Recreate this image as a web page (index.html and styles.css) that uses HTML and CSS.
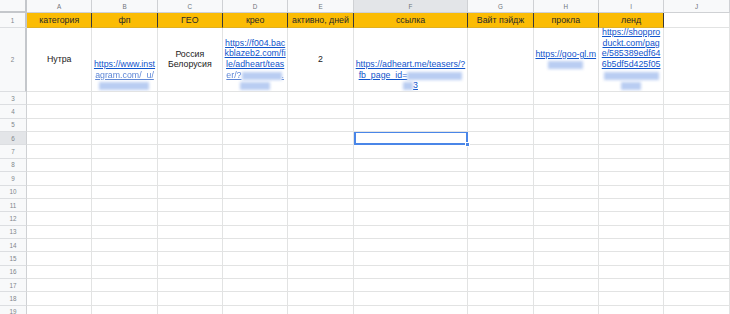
FILE: index.html
```html
<!DOCTYPE html>
<html lang="ru">
<head>
<meta charset="utf-8">
<title>Sheet</title>
<link rel="stylesheet" href="styles.css">
</head>
<body>
<div class="sheet">
  <div class="row hdr">
    <div class="c corner"></div>
    <div class="c">A</div><div class="c">B</div><div class="c">C</div><div class="c">D</div><div class="c">E</div>
    <div class="c sel">F</div><div class="c">G</div><div class="c">H</div><div class="c">I</div><div class="c">J</div>
  </div>
  <div class="row r1">
    <div class="c rn">1</div>
    <div class="c y">категория</div><div class="c y">фп</div><div class="c y">ГЕО</div><div class="c y">крео</div>
    <div class="c y">активно, дней</div><div class="c y">ссылка</div><div class="c y">Вайт пэйдж</div>
    <div class="c y">прокла</div><div class="c y">ленд</div><div class="c"></div>
  </div>
  <div class="row r2">
    <div class="c rn">2</div>
    <div class="c mid"><div class="ln">Нутра</div></div>
    <div class="c bot">
      <div class="ln"><a href="#">https://www.inst</a></div>
      <div class="ln"><a href="#" class="soft">agram.com/_u/</a></div>
      <div class="ln"><span class="blob w50"></span></div>
    </div>
    <div class="c mid"><div class="ln">Россия</div><div class="ln">Белорусия</div></div>
    <div class="c bot">
      <div class="ln"><a href="#">https://f004.bac</a></div>
      <div class="ln"><a href="#">kblazeb2.com/fi</a></div>
      <div class="ln"><a href="#">le/adheart/teas</a></div>
      <div class="ln"><a href="#" class="soft">er/?<span class="blob w40"></span>.</a></div>
      <div class="ln"><span class="blob w30"></span></div>
    </div>
    <div class="c mid"><div class="ln">2</div></div>
    <div class="c bot">
      <div class="ln"><a href="#">https://adheart.me/teasers/?</a></div>
      <div class="ln"><a href="#">fb_page_id=<span class="blob w55"></span></a></div>
      <div class="ln"><span class="blob w10"></span><a href="#">3</a></div>
    </div>
    <div class="c"></div>
    <div class="c mid">
      <div class="ln"><a href="#">https://goo-gl.m</a></div>
      <div class="ln"><span class="blob w35"></span></div>
    </div>
    <div class="c bot">
      <div class="ln"><a href="#">https://shoppro</a></div>
      <div class="ln"><a href="#">duckt.com/pag</a></div>
      <div class="ln"><a href="#">e/585389edf64</a></div>
      <div class="ln"><a href="#">6b5df5d425f05</a></div>
      <div class="ln"><span class="blob w55"></span></div>
      <div class="ln"><span class="blob w20"></span></div>
    </div>
    <div class="c"></div>
  </div>
  <div class="row"><div class="c rn">3</div><div class="c"></div><div class="c"></div><div class="c"></div><div class="c"></div><div class="c"></div><div class="c"></div><div class="c"></div><div class="c"></div><div class="c"></div><div class="c"></div></div>
  <div class="row"><div class="c rn">4</div><div class="c"></div><div class="c"></div><div class="c"></div><div class="c"></div><div class="c"></div><div class="c"></div><div class="c"></div><div class="c"></div><div class="c"></div><div class="c"></div></div>
  <div class="row"><div class="c rn">5</div><div class="c"></div><div class="c"></div><div class="c"></div><div class="c"></div><div class="c"></div><div class="c"></div><div class="c"></div><div class="c"></div><div class="c"></div><div class="c"></div></div>
  <div class="row"><div class="c rn sel">6</div><div class="c"></div><div class="c"></div><div class="c"></div><div class="c"></div><div class="c"></div><div class="c active"><span class="handle"></span></div><div class="c"></div><div class="c"></div><div class="c"></div><div class="c"></div></div>
  <div class="row"><div class="c rn">7</div><div class="c"></div><div class="c"></div><div class="c"></div><div class="c"></div><div class="c"></div><div class="c"></div><div class="c"></div><div class="c"></div><div class="c"></div><div class="c"></div></div>
  <div class="row"><div class="c rn">8</div><div class="c"></div><div class="c"></div><div class="c"></div><div class="c"></div><div class="c"></div><div class="c"></div><div class="c"></div><div class="c"></div><div class="c"></div><div class="c"></div></div>
  <div class="row"><div class="c rn">9</div><div class="c"></div><div class="c"></div><div class="c"></div><div class="c"></div><div class="c"></div><div class="c"></div><div class="c"></div><div class="c"></div><div class="c"></div><div class="c"></div></div>
  <div class="row"><div class="c rn">10</div><div class="c"></div><div class="c"></div><div class="c"></div><div class="c"></div><div class="c"></div><div class="c"></div><div class="c"></div><div class="c"></div><div class="c"></div><div class="c"></div></div>
  <div class="row"><div class="c rn">11</div><div class="c"></div><div class="c"></div><div class="c"></div><div class="c"></div><div class="c"></div><div class="c"></div><div class="c"></div><div class="c"></div><div class="c"></div><div class="c"></div></div>
  <div class="row"><div class="c rn">12</div><div class="c"></div><div class="c"></div><div class="c"></div><div class="c"></div><div class="c"></div><div class="c"></div><div class="c"></div><div class="c"></div><div class="c"></div><div class="c"></div></div>
  <div class="row"><div class="c rn">13</div><div class="c"></div><div class="c"></div><div class="c"></div><div class="c"></div><div class="c"></div><div class="c"></div><div class="c"></div><div class="c"></div><div class="c"></div><div class="c"></div></div>
  <div class="row"><div class="c rn">14</div><div class="c"></div><div class="c"></div><div class="c"></div><div class="c"></div><div class="c"></div><div class="c"></div><div class="c"></div><div class="c"></div><div class="c"></div><div class="c"></div></div>
  <div class="row"><div class="c rn">15</div><div class="c"></div><div class="c"></div><div class="c"></div><div class="c"></div><div class="c"></div><div class="c"></div><div class="c"></div><div class="c"></div><div class="c"></div><div class="c"></div></div>
  <div class="row"><div class="c rn">16</div><div class="c"></div><div class="c"></div><div class="c"></div><div class="c"></div><div class="c"></div><div class="c"></div><div class="c"></div><div class="c"></div><div class="c"></div><div class="c"></div></div>
  <div class="row"><div class="c rn">17</div><div class="c"></div><div class="c"></div><div class="c"></div><div class="c"></div><div class="c"></div><div class="c"></div><div class="c"></div><div class="c"></div><div class="c"></div><div class="c"></div></div>
  <div class="row"><div class="c rn">18</div><div class="c"></div><div class="c"></div><div class="c"></div><div class="c"></div><div class="c"></div><div class="c"></div><div class="c"></div><div class="c"></div><div class="c"></div><div class="c"></div></div>
  <div class="row"><div class="c rn">19</div><div class="c"></div><div class="c"></div><div class="c"></div><div class="c"></div><div class="c"></div><div class="c"></div><div class="c"></div><div class="c"></div><div class="c"></div><div class="c"></div></div>
</div>
</body>
</html>
```
FILE: styles.css
```css
html, body {
  margin: 0;
  padding: 0;
  background: #ffffff;
  overflow: hidden;
}
body {
  width: 730px;
  height: 314px;
  font-family: "Liberation Sans", Arial, sans-serif;
  color: #222222;
}
.sheet {
  display: flex;
  flex-direction: column;
  width: 730px;
}
.row {
  display: grid;
  grid-template-columns: 27px repeat(5, 65.33px) 114.67px repeat(3, 65.33px) 1fr;
  height: 13.37px;
  flex: none;
}
.c {
  box-sizing: border-box;
  border-right: 1px solid #e2e3e3;
  border-bottom: 1px solid #e2e3e3;
  overflow: hidden;
  font-size: 8.8px;
  min-width: 0;
}
.hdr {
  height: 13.33px;
}
.hdr .c {
  background: #f8f9fa;
  color: #70757a;
  font-size: 6.3px;
  display: flex;
  align-items: center;
  justify-content: center;
  border-right-color: #cfd1d4;
  border-bottom-color: #cfd1d4;
}
.hdr .c.sel {
  background: #e3e5e8;
}
.hdr .corner {
  border-right: 2px solid #c4c7cb;
  border-bottom: 2px solid #c4c7cb;
}
.rn {
  background: #f8f9fa;
  color: #80868b;
  font-size: 6.3px;
  display: flex;
  align-items: center;
  justify-content: center;
  border-right-color: #cfd1d4;
  border-bottom-color: #dcdee1;
}
.rn.sel {
  background: #e3e5e8;
}
.r1 {
  height: 14.67px;
}
.r1 .rn {
  border-right: 2px solid #c4c7cb;
}
.y {
  background: #fbbc04;
  color: #2a2a2a;
  display: flex;
  align-items: center;
  justify-content: center;
  white-space: nowrap;
  border-right: 1px solid #3a3a3a;
  border-bottom: 1px solid #e0b020;
}
.r2 {
  height: 64px;
}
.r2 .rn {
  border-right: 2px solid #c4c7cb;
}
.mid, .bot {
  display: flex;
  flex-direction: column;
  align-items: center;
  justify-content: center;
  text-align: center;
  white-space: nowrap;
}
.bot {
  justify-content: flex-end;
}
.ln {
  line-height: 10.67px;
  height: 10.67px;
}
a {
  color: #1155cc;
  text-decoration: underline;
}
.soft {
  filter: blur(0.5px);
  color: #5d86d6;
}
.blob {
  display: inline-block;
  height: 8px;
  vertical-align: -2px;
  background: #b9cdf2;
  filter: blur(1.8px);
}
.w10 { width: 10px; }
.w20 { width: 20px; }
.w30 { width: 30px; }
.w35 { width: 35px; }
.w40 { width: 40px; }
.w50 { width: 50px; }
.w55 { width: 55px; }
.active {
  position: relative;
  overflow: visible;
  border: 2px solid #4a86e8;
  border-top-width: 1.5px;
}
.handle {
  position: absolute;
  right: -4px;
  bottom: -4px;
  width: 5px;
  height: 5px;
  background: #4a86e8;
  border: 1px solid #ffffff;
  box-sizing: border-box;
}
```
